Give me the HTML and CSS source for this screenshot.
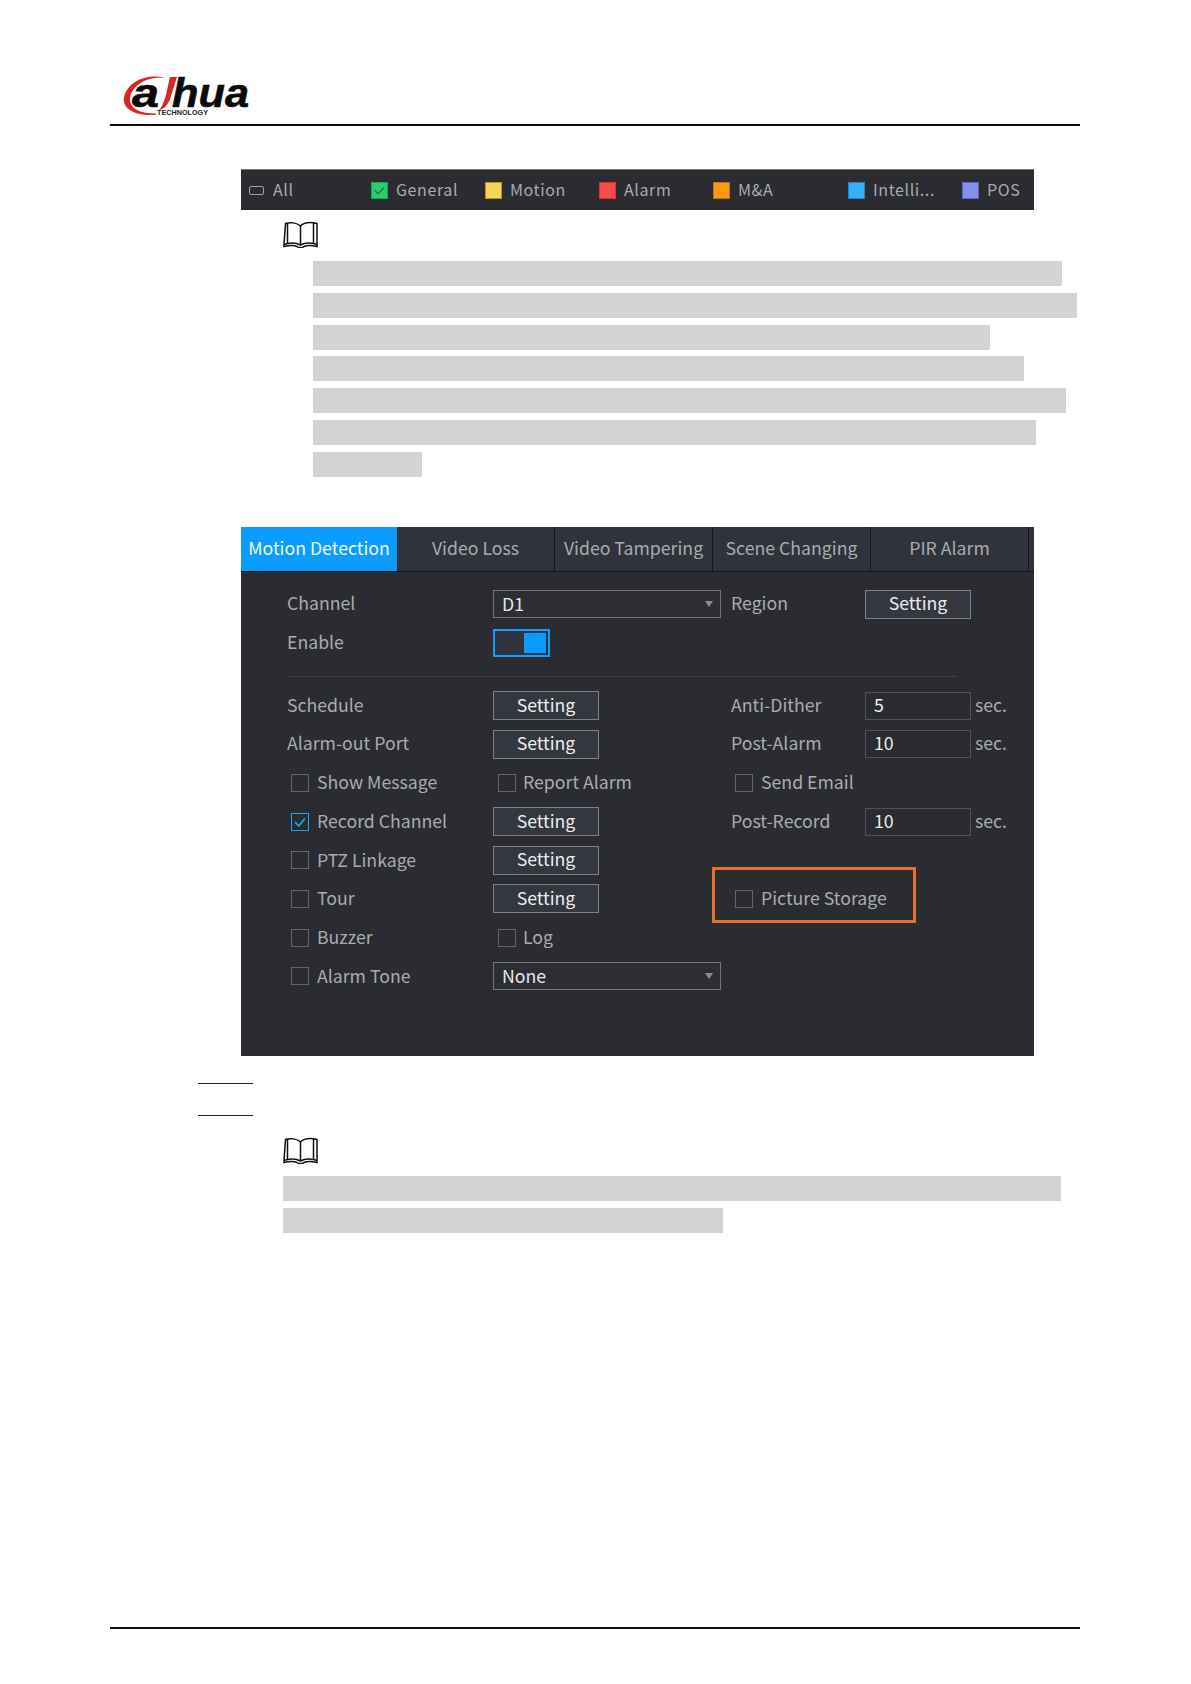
FILE: index.html
```html
<!DOCTYPE html>
<html lang="en">
<head>
<meta charset="utf-8">
<title>Motion Detection</title>
<link rel="stylesheet" href="styles.css">
</head>
<body>
<div class="page">
  <header class="head">
    <svg class="logo" viewBox="0 0 132 46" width="132" height="46">
      <path class="logo-red" d="M42 5C25 0 5 8 1 24C-1 36 12 43 32 42L34 40.500C18 41 6 36 7 25C9 12 24 3 42 5Z"/>
      <path class="logo-red" d="M47 4L54 4L47 26C45 32 41 36 36 37C40 33 41 28 43 22Z"/>
      <text class="logo-a" x="9" y="34" textLength="27" lengthAdjust="spacingAndGlyphs">a</text>
      <text class="logo-a" x="49" y="34" textLength="77" lengthAdjust="spacingAndGlyphs">hua</text>
      <text class="logo-sub" x="34" y="42" textLength="51" lengthAdjust="spacingAndGlyphs">TECHNOLOGY</text>
    </svg>
  </header>

  <section class="legend">
    <div class="leg"><span class="sw-all"></span><span>All</span></div>
    <div class="leg"><span class="sw sw-green"><svg viewBox="0 0 17 17" width="15" height="15"><path d="M3 8l4 4 7-7" fill="none" stroke="#0e7a3a" stroke-width="1.300"/></svg></span><span>General</span></div>
    <div class="leg"><span class="sw sw-yellow"></span><span>Motion</span></div>
    <div class="leg"><span class="sw sw-red"></span><span>Alarm</span></div>
    <div class="leg"><span class="sw sw-orange"></span><span>M&amp;A</span></div>
    <div class="leg"><span class="sw sw-blue"></span><span>Intelli...</span></div>
    <div class="leg"><span class="sw sw-violet"></span><span>POS</span></div>
  </section>

  <svg class="book book-a" viewBox="0 0 35 27" width="35" height="27">
    <path d="M17.500 5C14 1.500 7 1 2.500 2.500L1 23.500L1 25.500C7 24 12 24.500 14 25.500L15.500 26.500L19.500 26.500L21 25.500C23 24.500 28 24 34 25.500L34 2.500C28 1 21 1.500 17.500 5ZM17.500 5L17.500 24M4.500 2L4.500 22.500C9 21.500 14 22 17.500 24C21 22 26 21.500 30.500 22.500L30.500 2M1 23.500L4.500 22.500M34 23.500L30.500 22.500"/>
  </svg>

  <div class="bars bars-a">
    <div class="bar w1"></div>
    <div class="bar w2"></div>
    <div class="bar w3"></div>
    <div class="bar w4"></div>
    <div class="bar w5"></div>
    <div class="bar w6"></div>
    <div class="bar w7"></div>
  </div>

  <section class="panel">
    <nav class="tabs">
      <div class="tab active">Motion Detection</div>
      <div class="tab">Video Loss</div>
      <div class="tab">Video Tampering</div>
      <div class="tab">Scene Changing</div>
      <div class="tab">PIR Alarm</div>
    </nav>
    <div class="form form-top">
      <div class="lab">Channel</div>
      <div class="select"><span>D1</span><i class="caret"></i></div>
      <div class="lab">Region</div>
      <div class="btn">Setting</div>
      <div></div>

      <div class="lab">Enable</div>
      <div class="toggle"><span class="knob"></span></div>
      <div></div><div></div><div></div>
    </div>
    <div class="rule"></div>
    <div class="form form-main">
      <div class="lab">Schedule</div>
      <div class="cell"><div class="btn">Setting</div></div>
      <div class="lab">Anti-Dither</div>
      <div class="input">5</div>
      <div class="unit">sec.</div>

      <div class="lab">Alarm-out Port</div>
      <div class="cell"><div class="btn">Setting</div></div>
      <div class="lab">Post-Alarm</div>
      <div class="input">10</div>
      <div class="unit">sec.</div>

      <label class="chk"><span class="box"></span>Show Message</label>
      <label class="chk chk-mid"><span class="box"></span>Report Alarm</label>
      <label class="chk"><span class="box"></span>Send Email</label>
      <div></div><div></div>

      <label class="chk"><span class="box on"><svg viewBox="0 0 18 18" width="16" height="16"><path d="M3.500 9l4 4.500 7-8.500" fill="none" stroke="#19a5f0" stroke-width="2"/></svg></span>Record Channel</label>
      <div class="cell"><div class="btn">Setting</div></div>
      <div class="lab">Post-Record</div>
      <div class="input">10</div>
      <div class="unit">sec.</div>

      <label class="chk"><span class="box"></span>PTZ Linkage</label>
      <div class="cell"><div class="btn">Setting</div></div>
      <div></div><div></div><div></div>

      <label class="chk"><span class="box"></span>Tour</label>
      <div class="cell"><div class="btn">Setting</div></div>
      <label class="chk hl-cell"><span class="box"></span>Picture Storage<span class="highlight"></span></label>
      <div></div><div></div>

      <label class="chk"><span class="box"></span>Buzzer</label>
      <label class="chk chk-mid"><span class="box"></span>Log</label>
      <div></div><div></div><div></div>

      <label class="chk"><span class="box"></span>Alarm Tone</label>
      <div class="select"><span>None</span><i class="caret"></i></div>
      <div></div><div></div><div></div>
    </div>
  </section>

  <div class="step-rule step-one"></div>
  <div class="step-rule step-two"></div>

  <svg class="book book-b" viewBox="0 0 35 27" width="35" height="27">
    <path d="M17.500 5C14 1.500 7 1 2.500 2.500L1 23.500L1 25.500C7 24 12 24.500 14 25.500L15.500 26.500L19.500 26.500L21 25.500C23 24.500 28 24 34 25.500L34 2.500C28 1 21 1.500 17.500 5ZM17.500 5L17.500 24M4.500 2L4.500 22.500C9 21.500 14 22 17.500 24C21 22 26 21.500 30.500 22.500L30.500 2M1 23.500L4.500 22.500M34 23.500L30.500 22.500"/>
  </svg>

  <div class="bars bars-b">
    <div class="bar w8"></div>
    <div class="bar w9"></div>
  </div>

  <footer class="foot"></footer>
</div>
</body>
</html>
```
FILE: styles.css
```css
* { box-sizing: border-box; }
html, body { margin: 0; padding: 0; background: #fff; }
body { font-family: "Noto Sans CJK SC", "Noto Sans", sans-serif; }
.page { width: 1191px; height: 1684px; padding: 73px 111px 0 110px; display: flex; flex-direction: column; }

.head { height: 53px; border-bottom: 2px solid #111; padding-left: 13px; flex: none; }
.logo { display: block; overflow: visible; }
.logo-red { fill: #d8232a; }
.logo-a { font: italic 700 41px "Liberation Sans", sans-serif; fill: #0b0b0b; stroke: #0b0b0b; stroke-width: .6px; }
.logo-sub { font: 700 6.500px "Liberation Sans", sans-serif; fill: #222; }

.legend { margin: 43px 0 0 131px; width: 793px; height: 41px; background: #2a2c31; border-top: 1px solid #777; display: grid; grid-template-columns: 122px 114px 114px 114px 135px 114px 72px; padding-left: 8px; align-items: center; color: #a9abae; font-size: 16px; letter-spacing: .6px; flex: none; }
.leg { display: flex; align-items: center; gap: 8px; }
.leg > span:last-child { padding-bottom: 3px; }
.sw-all { width: 15px; height: 9px; border: 1.500px solid #a0a2a5; border-radius: 2px; margin-right: 1px; }
.sw { width: 17px; height: 17px; display: flex; align-items: center; justify-content: center; border: 1px solid transparent; }
.sw-green { background: #2ecc71; border-color: #1aa355; }
.sw-yellow { background: #f2d65c; border-color: #b8961f; }
.sw-red { background: #fa4a48; border-color: #c83a38; }
.sw-orange { background: #fb9a10; border-color: #b87310; }
.sw-blue { background: #35aefb; border-color: #2a80c0; }
.sw-violet { background: #8290ee; border-color: #5d63c8; }

.book { display: block; flex: none; fill: none; stroke: #111; stroke-width: 1.500; }
.book-a { margin: 11px 0 0 173px; }
.book-b { margin: 21px 0 0 173px; }

.bars { display: flex; flex-direction: column; flex: none; }
.bars-a { margin: 13px 0 0 203px; gap: 6.800px; }
.bars-b { margin: 12px 0 0 173px; gap: 7px; }
.bar { height: 25px; background: #d3d3d3; }
.w1 { width: 749px; }
.w2 { width: 764px; }
.w3 { width: 677px; }
.w4 { width: 711px; }
.w5 { width: 753px; }
.w6 { width: 723px; }
.w7 { width: 109px; }
.w8 { width: 778px; }
.w9 { width: 440px; }

.panel { margin: 50px 0 0 131px; width: 793px; height: 529px; background: #2a2c31; flex: none; }
.tabs { display: grid; grid-template-columns: 156px 158px 158px 158px 158px; height: 45px; background: #30333b; border-bottom: 1px solid #15161a; font-size: 17.700px; color: #a9abae; }
.tab { display: flex; align-items: center; justify-content: center; border-right: 1px solid #15161a; white-space: nowrap; padding-bottom: 4px; }
.tab.active { background: #0a9dff; color: #f2f7fb; border-right: 0; }

.form { display: grid; grid-template-columns: 206px 238px 134px 110px 60px; grid-auto-rows: 38.700px; padding-left: 46px; align-items: center; font-size: 17.700px; color: #a9abae; }
.form-top { margin-top: 13px; }
.form-main { margin-top: 9px; }
.lab { white-space: nowrap; padding-bottom: 4px; }
.cell { display: flex; }
.select { width: 228px; height: 28px; border: 1px solid #74767a; background: #2c2e33; color: #e6e7e8; display: flex; align-items: center; justify-content: space-between; padding: 0 7px 3px 8px; }
.caret { width: 0; height: 0; border-left: 4px solid transparent; border-right: 4px solid transparent; border-top: 6px solid #8b8d91; margin-top: 3px; }
.btn { width: 106px; height: 29px; border: 1px solid #7f8185; background: #343640; color: #eceded; display: flex; align-items: center; justify-content: center; padding-bottom: 4px; }
.toggle { width: 57px; height: 28px; border: 2px solid #0ea0ff; background: #30333b; padding: 2px; display: flex; justify-content: flex-end; }
.knob { width: 22px; height: 20px; background: #0a9bff; }
.rule { height: 1px; margin: 14px 77px 0 46px; background: #3e4045; }
.input { width: 106px; height: 28px; border: 1px solid #505257; background: #2a2c31; color: #eceded; display: flex; align-items: center; padding: 0 0 4px 8px; }
.unit { padding-bottom: 4px; }
.chk { display: flex; align-items: center; gap: 8px; padding: 0 0 3px 4px; white-space: nowrap; }
.chk-mid { padding-left: 5px; gap: 7px; }
.box { width: 18px; height: 18px; border: 1px solid #63656a; flex: none; display: flex; align-items: center; justify-content: center; margin-top: 3px; }
.box.on { border-color: #19a5f0; }
.hl-cell { position: relative; }
.highlight { position: absolute; left: -19px; top: calc(50% - 32px); width: 204px; height: 56px; border: 3px solid #e8702a; }

.step-rule { flex: none; width: 55px; height: 1px; background: #222; margin-left: 88px; }
.step-one { margin-top: 27px; }
.step-two { margin-top: 31px; }

.foot { flex: none; margin-top: auto; margin-bottom: 55px; border-top: 2px solid #111; }
```
